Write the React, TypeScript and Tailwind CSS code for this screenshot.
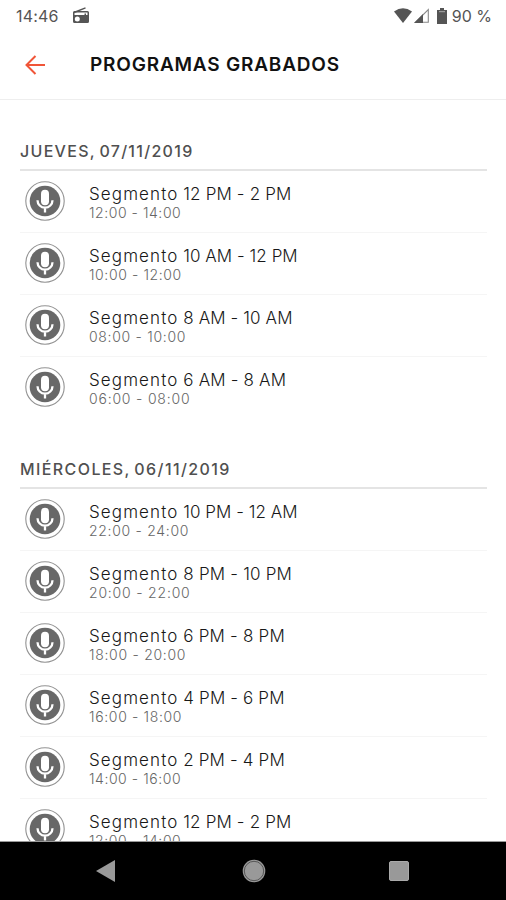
type Program = { title: string; time: string; spacing: string; timeSpacing: string };
type Day = { label: string; spacing: string; programs: Program[] };

const days: Day[] = [
  {
    label: "JUEVES, 07/11/2019",
    spacing: "h-[71px] tracking-[1.3px]",
    programs: [
      { title: "12 PM - 2 PM", time: "12:00 - 14:00", spacing: "tracking-[0.15px]", timeSpacing: "tracking-[0.55px]" },
      { title: "10 AM - 12 PM", time: "10:00 - 12:00", spacing: "tracking-[0.05px]", timeSpacing: "tracking-[0.6px]" },
      { title: "8 AM - 10 AM", time: "08:00 - 10:00", spacing: "tracking-[0.12px]", timeSpacing: "tracking-[0.7px]" },
      { title: "6 AM - 8 AM", time: "06:00 - 08:00", spacing: "tracking-[0.18px]", timeSpacing: "tracking-[0.8px]" },
    ],
  },
  {
    label: "MIÉRCOLES, 06/11/2019",
    spacing: "h-[70px] tracking-[1.4px]",
    programs: [
      { title: "10 PM - 12 AM", time: "22:00 - 24:00", spacing: "tracking-[0.05px]", timeSpacing: "tracking-[0.7px]" },
      { title: "8 PM - 10 PM", time: "20:00 - 22:00", spacing: "tracking-[0.2px]", timeSpacing: "tracking-[0.8px]" },
      { title: "6 PM - 8 PM", time: "18:00 - 20:00", spacing: "tracking-[0.2px]", timeSpacing: "tracking-[0.7px]" },
      { title: "4 PM - 6 PM", time: "16:00 - 18:00", spacing: "tracking-[0.15px]", timeSpacing: "tracking-[0.65px]" },
      { title: "2 PM - 4 PM", time: "14:00 - 16:00", spacing: "tracking-[0.15px]", timeSpacing: "tracking-[0.55px]" },
      { title: "12 PM - 2 PM", time: "12:00 - 14:00", spacing: "tracking-[0.15px]", timeSpacing: "tracking-[0.55px]" },
    ],
  },
];

function MicIcon() {
  return (
    <svg className="mb-0.5 h-10 w-10 shrink-0" viewBox="0 0 40 40" fill="none">
      <circle cx="20" cy="20" r="19.2" stroke="#929292" strokeWidth="1.1" />
      <circle cx="20" cy="20" r="15.3" fill="#686868" />
      <rect x="16" y="8.8" width="8" height="15.4" rx="4" fill="#fff" />
      <path d="M12.5 19.2a7.5 7.5 0 0 0 15 0M20 26.7v4.8" stroke="#fff" strokeWidth="2.3" />
    </svg>
  );
}

function StatusBar() {
  return (
    <div className="flex h-[31px] shrink-0 items-center pl-4 text-[16px] text-[#555]">
      <span className="w-[56px] tracking-[0.2px]">14:46</span>
      <svg className="h-[17px] w-[18px]" viewBox="0 0 18 17">
        <path d="M2 5.5 13.5.8" stroke="#555" strokeWidth="1.4" />
        <path fillRule="evenodd" fill="#555" d="M2.5 4h13Q17 4 17 5.5v9q0 1.5-1.5 1.5h-13Q1 16 1 14.5v-9Q1 4 2.5 4Zm0 1.5V8h10V6.5H14V8h1.5V5.5ZM5.3 9.5a2.5 2.5 0 1 0 0 5 2.5 2.5 0 0 0 0-5Z" />
      </svg>
      <div className="ml-auto flex items-center pr-[14px]">
        <svg className="h-[15px] w-[18px]" viewBox="0 0 18 15">
          <path fill="#555" d="M0 3.5Q9-3 18 3.5L9 15Z" />
        </svg>
        <svg className="ml-[2px] h-[15px] w-[15px]" viewBox="0 0 15 15">
          <path d="M1.5 14.3H14.3V1.5Z" fill="none" stroke="#888" strokeWidth="1.1" />
          <path d="M0 15 9 6v9Z" fill="#555" />
        </svg>
        <svg className="ml-[8px] h-[16px] w-[10px]" viewBox="0 0 10 16">
          <path fill="#555" d="M3 0h4v2h3v14H0V2h3Z" />
          <path d="M2 3.7h6" stroke="#aaa" />
        </svg>
        <span className="ml-[5px]">90 %</span>
      </div>
    </div>
  );
}

function ProgramRow({ program }: { program: Program }) {
  return (
    <li className="flex h-[62px] items-center border-b border-[#f5f5f5] pl-[5px] last:border-transparent">
      <MicIcon />
      <div className="ml-6 pt-[2px] whitespace-nowrap">
        <p className={`text-[17px] leading-5 font-light text-[#181818] ${program.spacing}`}>
          <span className="tracking-[1.1px]">Segmento</span> {program.title}
        </p>
        <p className={`text-[14px] leading-[18px] font-light text-[#666] ${program.timeSpacing}`}>{program.time}</p>
      </div>
    </li>
  );
}

export default function App() {
  return (
    <div className="flex h-[900px] w-[506px] flex-col overflow-hidden bg-white font-[Inter,sans-serif]">
      <StatusBar />
      <header className="flex h-[69px] shrink-0 items-center border-b border-[#eee] pl-[25px]">
        <svg className="h-5 w-5" viewBox="0 0 20 20" fill="none" stroke="#f05538" strokeWidth="2">
          <path d="M20 10H2M10.5 1 1.5 10l9 9" />
        </svg>
        <h1 className="ml-[45px] pt-px text-[19px] font-semibold tracking-[0.8px] text-[#111]">PROGRAMAS GRABADOS</h1>
      </header>
      <main className="min-h-0 flex-1 overflow-hidden pr-[19px] pl-5">
        {days.map((day) => (
          <section key={day.label}>
            <h2 className={`flex items-end border-b-2 border-[#e4e4e4] pb-[6px] text-[16px] leading-6 font-medium [word-spacing:-2px] whitespace-nowrap text-[#505050] ${day.spacing}`}>
              {day.label}
            </h2>
            <ul>
              {day.programs.map((program) => (
                <ProgramRow key={program.title} program={program} />
              ))}
            </ul>
          </section>
        ))}
      </main>
      <nav className="flex h-[59px] shrink-0 items-center border-t border-[#999] bg-black">
        <svg className="ml-[96px] h-[22px] w-[19px]" viewBox="0 0 19 22">
          <path fill="#999" d="M0 11 19 0v22Z" />
        </svg>
        <svg className="ml-[127px] h-6 w-6" viewBox="0 0 24 24">
          <circle cx="12" cy="12" r="11.3" fill="#999" />
          <circle cx="12" cy="12" r="9.7" fill="none" stroke="#555" />
        </svg>
        <span className="ml-[123px] h-5 w-5 rounded-xs border border-[#aaa] bg-[#999]" />
      </nav>
    </div>
  );
}
